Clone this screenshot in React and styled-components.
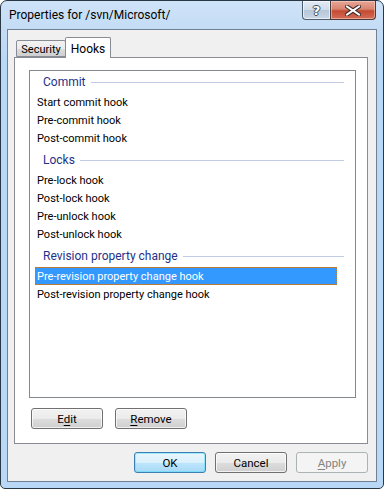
import React from 'react'
import styled, { createGlobalStyle } from 'styled-components'

const uiFont = `'Roboto', 'Noto Sans', 'DejaVu Sans', sans-serif`

const GlobalStyle = createGlobalStyle`
  html, body {
    margin: 0;
    padding: 0;
    background: #ffffff;
  }
  body {
    font-family: ${uiFont};
    font-size: 11px;
  }
`

const groups = [
  {
    title: 'Commit',
    items: ['Start commit hook', 'Pre-commit hook', 'Post-commit hook'],
  },
  {
    title: 'Locks',
    items: ['Pre-lock hook', 'Post-lock hook', 'Pre-unlock hook', 'Post-unlock hook'],
  },
  {
    title: 'Revision property change',
    items: ['Pre-revision property change hook', 'Post-revision property change hook'],
  },
]

const selectedItem = 'Pre-revision property change hook'

export default function App() {
  return (
    <>
      <GlobalStyle />
      <Window>
        <TitleBar>
          <Caption>Properties for /svn/Microsoft/</Caption>
          <CaptionButtons>
            <HelpButton>?</HelpButton>
            <CloseButton>
              <svg width="16" height="11" viewBox="0 0 16 11">
                <path
                  d="M2 1.5 L8 5.5 L14 1.5 M2 9.5 L8 5.5 L14 9.5"
                  stroke="#3b2a2a"
                  strokeWidth="4"
                  fill="none"
                  strokeLinecap="square"
                />
                <path
                  d="M2 1.5 L8 5.5 L14 1.5 M2 9.5 L8 5.5 L14 9.5"
                  stroke="#ffffff"
                  strokeWidth="2"
                  fill="none"
                  strokeLinecap="square"
                />
              </svg>
            </CloseButton>
          </CaptionButtons>
        </TitleBar>
        <Client>
          <TabStrip>
            <Tab>Security</Tab>
            <Tab $active>Hooks</Tab>
          </TabStrip>
          <TabPanel>
            <ListBox>
              {groups.map((group, gi) => (
                <div key={group.title}>
                  <GroupHeader $first={gi === 0}>
                    <span>{group.title}</span>
                    <GroupLine />
                  </GroupHeader>
                  {group.items.map((item) => (
                    <ListItem key={item} $selected={item === selectedItem}>
                      {item}
                    </ListItem>
                  ))}
                </div>
              ))}
            </ListBox>
            <PanelButtons>
              <Button>
                E<u>d</u>it
              </Button>
              <Button>
                <u>R</u>emove
              </Button>
            </PanelButtons>
          </TabPanel>
          <DialogButtons>
            <Button $default>OK</Button>
            <Button>Cancel</Button>
            <Button disabled>
              <u>A</u>pply
            </Button>
          </DialogButtons>
        </Client>
      </Window>
    </>
  )
}

const Window = styled.div`
  width: 384px;
  height: 489px;
  box-sizing: border-box;
  border: 1px solid #2a3846;
  border-radius: 7px 7px 5px 5px;
  padding: 0 6px 6px;
  background: linear-gradient(#cfe3f8 0px, #c3dcf5 28px, #b9d7f7 60px, #b9d7f7 100%);
  display: flex;
  flex-direction: column;
  overflow: hidden;
`

const TitleBar = styled.div`
  height: 28px;
  display: flex;
  align-items: flex-start;
`

const Caption = styled.div`
  padding: 7px 0 0 2px;
  font-size: 12px;
  color: #000000;
  flex: 1;
`

const CaptionButtons = styled.div`
  display: flex;
  margin-right: 1px;
`

const HelpButton = styled.div`
  width: 28px;
  height: 19px;
  box-sizing: border-box;
  border: 1px solid #4c5d70;
  border-top: none;
  border-right: none;
  border-radius: 0 0 0 4px;
  background: linear-gradient(#e3ecf6 0%, #cfdbe8 50%, #b6c6d8 51%, #c9d7e6 100%);
  box-shadow: inset 0 0 0 1px rgba(255, 255, 255, 0.6);
  display: flex;
  align-items: center;
  justify-content: center;
  font-family: 'DejaVu Sans', sans-serif;
  font-weight: bold;
  font-size: 13px;
  color: #ffffff;
  text-shadow: 1px 0 0 #3d4b5a, -1px 0 0 #3d4b5a, 0 1px 0 #3d4b5a, 0 -1px 0 #3d4b5a;
`

const CloseButton = styled.div`
  width: 46px;
  height: 19px;
  box-sizing: border-box;
  border: 1px solid #4c3a3a;
  border-top: none;
  border-radius: 0 0 4px 0;
  background: linear-gradient(#e9a696 0%, #d88470 45%, #c34a32 55%, #d56d58 100%);
  box-shadow: inset 0 0 0 1px rgba(255, 220, 210, 0.5);
  display: flex;
  align-items: center;
  justify-content: center;
`

const Client = styled.div`
  flex: 1;
  border: 1px solid #6f8193;
  background: #f0f0f0;
  padding: 7px 8px 0 6px;
  display: flex;
  flex-direction: column;
`

const TabStrip = styled.div`
  display: flex;
  align-items: flex-end;
  height: 20px;
  padding-left: 2px;
  position: relative;
  z-index: 1;
`

const Tab = styled.div`
  box-sizing: border-box;
  height: ${(p) => (p.$active ? '21px' : '17px')};
  width: ${(p) => (p.$active ? '46px' : '50px')};
  margin-bottom: ${(p) => (p.$active ? '-1px' : '0')};
  margin-left: ${(p) => (p.$active ? '-1px' : '0')};
  padding-top: 1px;
  border: 1px solid #898c95;
  border-bottom: ${(p) => (p.$active ? 'none' : '1px solid #898c95')};
  border-radius: 2px 2px 0 0;
  background: ${(p) =>
    p.$active ? '#ffffff' : 'linear-gradient(#f2f2f2 0%, #ebebeb 50%, #dddddd 51%, #cfcfcf 100%)'};
  display: flex;
  align-items: center;
  justify-content: center;
  color: #000000;
  font-size: ${(p) => (p.$active ? '12px' : '11px')};
`

const TabPanel = styled.div`
  box-sizing: border-box;
  height: 387px;
  border: 1px solid #898c95;
  background: #ffffff;
  padding: 12px 11px 0 14px;
  display: flex;
  flex-direction: column;
`

const ListBox = styled.div`
  box-sizing: border-box;
  height: 328px;
  border: 1px solid #828790;
  background: #ffffff;
`

const GroupHeader = styled.div`
  height: 18px;
  margin: ${(p) => (p.$first ? '2px' : '4px')} 11px 2px 13px;
  display: flex;
  align-items: center;
  gap: 5px;
  color: #1e3287;
  font-size: 12px;
  white-space: nowrap;
`

const GroupLine = styled.div`
  flex: 1;
  height: 1px;
  background: #c2cbe3;
`

const ListItem = styled.div`
  box-sizing: border-box;
  height: 18px;
  width: 302px;
  margin-left: 5px;
  padding-left: 2px;
  display: flex;
  align-items: center;
  white-space: nowrap;
  font-size: 11px;
  color: ${(p) => (p.$selected ? '#ffffff' : '#000000')};
  background: ${(p) => (p.$selected ? '#3399ff' : 'transparent')};
  outline: ${(p) => (p.$selected ? '1px dotted #b97a3c' : 'none')};
  outline-offset: -1px;
`

const PanelButtons = styled.div`
  display: flex;
  gap: 12px;
  padding: 10px 0 0 2px;
`

const DialogButtons = styled.div`
  display: flex;
  justify-content: flex-end;
  gap: 9px;
  padding: 8px 0 0;
`

const Button = styled.button`
  width: 72px;
  height: 21px;
  box-sizing: border-box;
  padding: 0;
  border-radius: 3px;
  font-family: ${uiFont};
  font-size: 11.5px;
  color: ${(p) => (p.disabled ? '#838383' : '#000000')};
  border: 1px solid ${(p) => (p.$default ? '#3c7fb1' : p.disabled ? '#adb2b5' : '#707070')};
  background: ${(p) =>
    p.disabled
      ? '#f4f4f4'
      : p.$default
      ? 'linear-gradient(#eaf6fd 0%, #d9f0fc 50%, #bee6fd 51%, #a7d9f5 100%)'
      : 'linear-gradient(#f2f2f2 0%, #ebebeb 50%, #dddddd 51%, #cfcfcf 100%)'};
  box-shadow: ${(p) =>
    p.disabled
      ? 'none'
      : p.$default
      ? 'inset 0 0 0 1px rgba(72, 220, 255, 0.45)'
      : 'inset 0 0 0 1px rgba(255, 255, 255, 0.7)'};
  u {
    text-decoration: underline;
    text-underline-offset: 2px;
  }
`
